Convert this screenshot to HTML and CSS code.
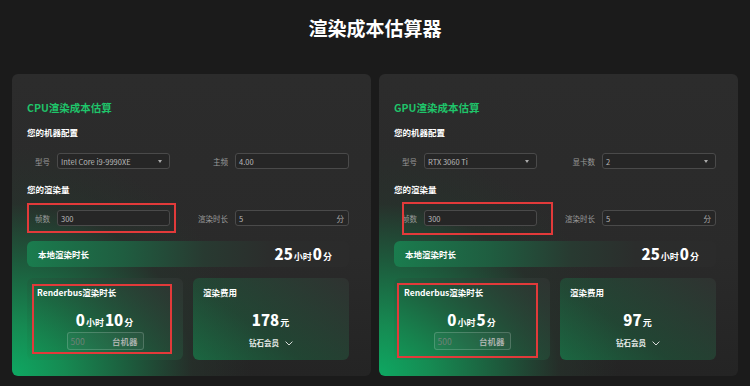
FILE: index.html
```html
<!DOCTYPE html>
<html lang="zh">
<head>
<meta charset="utf-8">
<title>渲染成本估算器</title>
<link rel="stylesheet" href="styles.css">
</head>
<body>
<h1 class="page-title">渲染成本估算器</h1>
<div class="cards">
  <section class="card">
    <h2 class="card-title">CPU渲染成本估算</h2>
    <h3 class="section">您的机器配置</h3>
    <div class="row">
      <div class="field a"><span class="lbl">型号</span><div class="box">Intel Core i9-9990XE<span class="caret"></span></div></div>
      <div class="field b"><span class="lbl">主频</span><div class="box">4.00</div></div>
    </div>
    <h3 class="section s2">您的渲染量</h3>
    <div class="row">
      <div class="field a"><span class="lbl">帧数</span><div class="box">300</div><span class="mark mark-frames-cpu"></span></div>
      <div class="field b"><span class="lbl">渲染时长</span><div class="box">5<span class="unit">分</span></div></div>
    </div>
    <div class="local">
      <span class="local-lbl">本地渲染时长</span>
      <span class="val"><b>25</b><small>小时</small><b>0</b><small>分</small></span>
    </div>
    <div class="bottom">
      <div class="panel">
        <div class="panel-title">Renderbus渲染时长</div>
        <div class="val center"><b>0</b><small>小时</small><b>10</b><small>分</small></div>
        <div class="machines"><span class="num">500</span><span class="tag">台机器</span></div>
        <span class="mark mark-rb-cpu"></span>
      </div>
      <div class="panel">
        <div class="panel-title">渲染费用</div>
        <div class="val center"><b>178</b><small>元</small></div>
        <div class="member">钻石会员<svg width="8" height="5" viewBox="0 0 8 5"><path d="M0.6 0.6L4 4L7.4 0.6" fill="none" stroke="#d8dcd9" stroke-width="1"/></svg></div>
      </div>
    </div>
  </section>
  <section class="card">
    <h2 class="card-title">GPU渲染成本估算</h2>
    <h3 class="section">您的机器配置</h3>
    <div class="row">
      <div class="field a"><span class="lbl">型号</span><div class="box">RTX 3060 Ti<span class="caret"></span></div></div>
      <div class="field b"><span class="lbl">显卡数</span><div class="box">2<span class="caret"></span></div></div>
    </div>
    <h3 class="section s2">您的渲染量</h3>
    <div class="row">
      <div class="field a"><span class="lbl">帧数</span><div class="box">300</div><span class="mark mark-frames-gpu"></span></div>
      <div class="field b"><span class="lbl">渲染时长</span><div class="box">5<span class="unit">分</span></div></div>
    </div>
    <div class="local">
      <span class="local-lbl">本地渲染时长</span>
      <span class="val"><b>25</b><small>小时</small><b>0</b><small>分</small></span>
    </div>
    <div class="bottom">
      <div class="panel">
        <div class="panel-title">Renderbus渲染时长</div>
        <div class="val center"><b>0</b><small>小时</small><b>5</b><small>分</small></div>
        <div class="machines"><span class="num">500</span><span class="tag">台机器</span></div>
        <span class="mark mark-rb-gpu"></span>
      </div>
      <div class="panel">
        <div class="panel-title">渲染费用</div>
        <div class="val center"><b>97</b><small>元</small></div>
        <div class="member">钻石会员<svg width="8" height="5" viewBox="0 0 8 5"><path d="M0.6 0.6L4 4L7.4 0.6" fill="none" stroke="#d8dcd9" stroke-width="1"/></svg></div>
      </div>
    </div>
  </section>
</div>
</body>
</html>
```
FILE: styles.css
```css
* { box-sizing: border-box; margin: 0; padding: 0; }
html, body { width: 750px; height: 386px; overflow: hidden; }
body {
  background: #1b1b1b;
  font-family: "Noto Sans CJK SC", "Noto Sans", sans-serif;
  color: #fff;
}
.page-title {
  height: 74px;
  padding-top: 17px;
  text-align: center;
  font-size: 19px;
  line-height: 22px;
  font-weight: 700;
}
.cards { display: flex; gap: 8px; padding: 0 12px; }
.card {
  width: 359px;
  height: 302px;
  border-radius: 6px;
  padding: 26px 22px 0 15px;
  position: relative;
  display: flex;
  flex-direction: column;
  background:
    radial-gradient(ellipse 240px 230px at 0% 100%, #0ea862 0%, #168a52 22%, #1d5a3c 50%, rgba(38,52,44,0.6) 75%, rgba(40,40,40,0) 100%),
    linear-gradient(180deg, #2c2c2c 0%, #2a2a2a 60%, #242424 100%);
}
.card-title { font-size: 10.5px; line-height: 16px; font-weight: 700; color: #1fc46a; }
.section { font-size: 8.5px; line-height: 12px; font-weight: 700; margin-top: 10px; color: #fff; }
.section.s2 { margin-top: 14px; }
.row { display: flex; gap: 6px; margin-top: 15px; height: 16px; }
.field { display: flex; align-items: center; gap: 7px; position: relative; }
.lbl { font-size: 7.5px; color: #9a9a9a; text-align: right; }
.field.a .lbl { width: 23px; }
.field.b .lbl { width: 52px; }
.box {
  height: 16px;
  border: 1px solid #4a4a4a;
  border-radius: 3px;
  background: #262626;
  font-size: 7.5px;
  color: #b8b8b8;
  padding: 0 4px 0 3px;
  display: flex;
  align-items: center;
  justify-content: space-between;
}
.field.a .box { width: 113px; }
.field.b .box { width: 114px; }
.caret {
  width: 0; height: 0;
  border-left: 2.5px solid transparent;
  border-right: 2.5px solid transparent;
  border-top: 3px solid #aaaaaa;
  margin-right: 3px;
}
.unit { color: #aaa; }
.mark { position: absolute; border: 2px solid #e23a3a; pointer-events: none; }
.mark-frames-cpu { left: 0; top: -7px; right: -6px; bottom: -7px; }
.mark-frames-gpu { left: 8px; top: -8px; right: -16px; bottom: -9px; }
.mark-rb-cpu { left: 5px; top: 6px; right: 11px; bottom: 6px; }
.mark-rb-gpu { left: 3px; top: 5px; right: 12px; bottom: 2px; }
.local {
  margin-top: 15px;
  height: 26px;
  border-radius: 6px;
  padding: 0 16px 0 11px;
  display: flex;
  align-items: center;
  justify-content: space-between;
  background: linear-gradient(90deg, #1a7c4e 0%, #1f5d40 30%, #283a31 55%, #2b2d2c 75%, #2b2b2b 100%);
}
.local-lbl { font-size: 8.5px; font-weight: 700; }
.val { display: flex; align-items: baseline; font-weight: 700; }
.val b { font-size: 15px; line-height: 20px; }
.val small { font-size: 9px; margin: 0 1px; }
.val.center { justify-content: center; margin-top: 12px; }
.bottom { display: flex; gap: 10px; margin-top: 11px; }
.panel {
  width: 156px;
  height: 82px;
  border-radius: 6px;
  padding-top: 8px;
  position: relative;
  display: flex;
  flex-direction: column;
  align-items: stretch;
  background: linear-gradient(35deg, rgba(18,150,85,0.55) 0%, rgba(30,95,62,0.55) 40%, rgba(48,52,50,0.85) 100%);
}
.panel-title { font-size: 8.5px; line-height: 12px; font-weight: 700; padding-left: 10px; }
.machines {
  align-self: center;
  margin-top: 2px;
  width: 77px;
  height: 18px;
  border: 1px solid rgba(255,255,255,0.18);
  border-radius: 3px;
  background: rgba(255,255,255,0.04);
  display: flex;
  align-items: center;
  justify-content: space-between;
  padding: 0 5px 0 3px;
  font-size: 8.5px;
}
.num { color: #6e8278; }
.tag { color: #a8b0ac; font-weight: 700; }
.member {
  margin-top: 7px;
  font-size: 7.5px;
  line-height: 12px;
  font-weight: 700;
  color: #e8ecea;
  display: flex;
  align-items: center;
  justify-content: center;
  gap: 6px;
}
```
